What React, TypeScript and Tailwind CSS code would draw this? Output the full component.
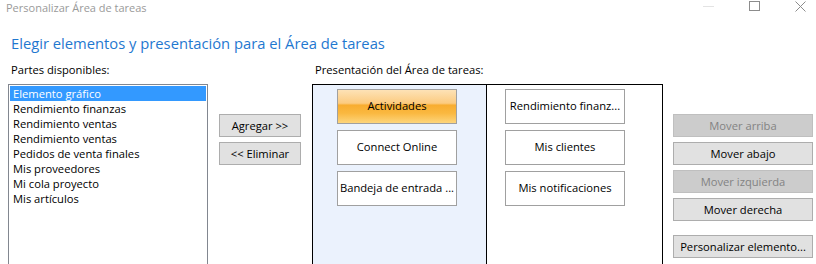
import React from "react";

const PARTES = [
  "Elemento gráfico",
  "Rendimiento finanzas",
  "Rendimiento ventas",
  "Rendimiento ventas",
  "Pedidos de venta finales",
  "Mis proveedores",
  "Mi cola proyecto",
  "Mis artículos",
];

const COL_A = ["Actividades", "Connect Online", "Bandeja de entrada ..."];
const COL_B = ["Rendimiento finanz...", "Mis clientes", "Mis notificaciones"];

function Boton({ label, disabled = false }: { label: string; disabled?: boolean }) {
  return (
    <div
      className={
        "h-[23px] flex items-center justify-center border text-[11.2px] leading-none " +
        (disabled
          ? "bg-[#cccccc] border-[#bfbfbf] text-[#838383]"
          : "bg-[#e1e1e1] border-[#adadad] text-black")
      }
    >
      {label}
    </div>
  );
}

function Tile({ label, active = false }: { label: string; active?: boolean }) {
  return (
    <div
      className={
        "w-[120px] h-[35px] flex items-center justify-center border border-[#a0a0a0] text-[11.2px] text-black whitespace-nowrap " +
        (active
          ? "bg-[linear-gradient(to_bottom,#fde2b6_0%,#fccb80_40%,#f8ad30_46%,#fab840_70%,#fdd57c_100%)]"
          : "bg-white")
      }
    >
      {label}
    </div>
  );
}

export default function App() {
  return (
    <div className="w-[816px] h-[264px] bg-white overflow-hidden font-['Segoe_UI','Open_Sans','Noto_Sans',sans-serif] select-none">
      {/* title bar */}
      <div className="h-[16px] flex items-start">
        <span className="pl-[6px] text-[11px] leading-[15px] text-[#9a9a9a]">Personalizar Área de tareas</span>
        <div className="ml-auto flex items-start">
          <div className="w-[11px] h-px bg-[#e3e3e3] mt-[6px]" />
          <div className="w-[11px] h-[10px] border border-[#8c8c8c] ml-[35px] mt-px" />
          <svg width="11" height="11" viewBox="0 0 11 11" className="ml-[35px] mr-[10px] mt-px">
            <path d="M0.5 0.5L10.5 10.5M10.5 0.5L0.5 10.5" stroke="#8c8c8c" strokeWidth="1" />
          </svg>
        </div>
      </div>

      {/* heading */}
      <h1 className="pl-[11px] mt-[17px] text-[14.75px] leading-[20px] text-[#1f78d0] font-normal">
        Elegir elementos y presentación para el Área de tareas
      </h1>

      <div className="flex pl-[8px] mt-[9px]">
        {/* partes disponibles */}
        <div className="w-[200px]">
          <div className="pl-[3px] text-[11.2px] leading-[16px] text-black">Partes disponibles:</div>
          <div className="mt-[6px] h-[200px] border border-[#828790] p-px">
            {PARTES.map((p, i) => (
              <div
                key={i}
                className={
                  "h-[15px] pl-[3px] text-[11.2px] leading-[15px] " +
                  (i === 0 ? "bg-[#3399ff] text-white" : "text-black")
                }
              >
                {p}
              </div>
            ))}
          </div>
        </div>

        {/* agregar / eliminar */}
        <div className="w-[82px] ml-[11px] pt-[52px] flex flex-col gap-[5px]">
          <Boton label="Agregar >>" />
          <Boton label="<< Eliminar" />
        </div>

        {/* presentacion */}
        <div className="ml-[11px]">
          <div className="pl-[3px] text-[11.2px] leading-[16px] text-black">Presentación del Área de tareas:</div>
          <div className="mt-[6px] w-[351px] h-[200px] border border-black flex">
            <div className="w-[174px] bg-[#ebf2fd] border-r border-black pl-[24px] pt-[4px] flex flex-col gap-[6px]">
              {COL_A.map((t, i) => (
                <Tile key={t} label={t} active={i === 0} />
              ))}
            </div>
            <div className="flex-1 pl-[18px] pt-[4px] flex flex-col gap-[6px]">
              {COL_B.map((t) => (
                <Tile key={t} label={t} />
              ))}
            </div>
          </div>
        </div>

        {/* mover */}
        <div className="w-[140px] ml-[10px] pt-[52px] flex flex-col gap-[5px]">
          <Boton label="Mover arriba" disabled />
          <Boton label="Mover abajo" />
          <Boton label="Mover izquierda" disabled />
          <Boton label="Mover derecha" />
          <div className="mt-[9px]">
            <Boton label="Personalizar elemento..." />
          </div>
        </div>
      </div>
    </div>
  );
}
